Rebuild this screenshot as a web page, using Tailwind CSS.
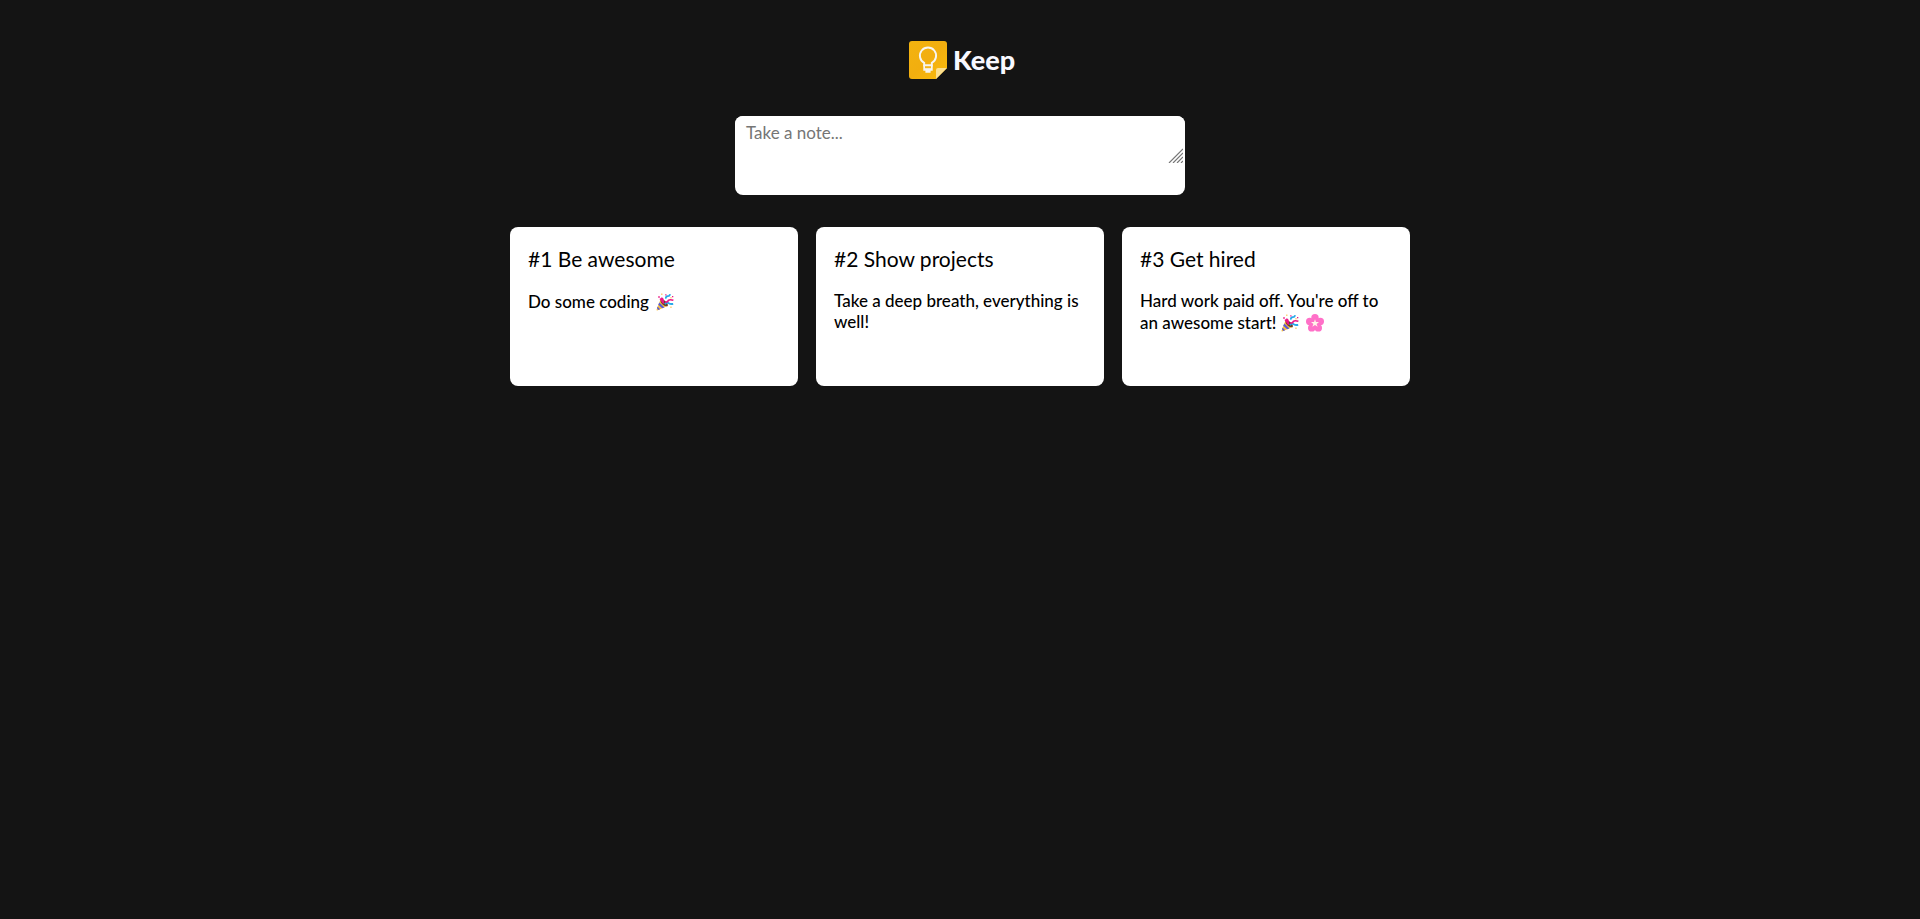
<!DOCTYPE html>
<html lang="en">
<head>
<meta charset="utf-8">
<meta name="viewport" content="width=device-width, initial-scale=1">
<title>Keep</title>
<script src="https://cdn.jsdelivr.net/npm/@tailwindcss/browser@4"></script>
</head>
<body class="min-h-screen bg-[#141414] px-4 font-['Gill_Sans','Gill_Sans_MT',Lato,sans-serif] text-black">
<svg class="hidden" aria-hidden="true">
  <symbol id="popper" viewBox="0 0 18 18">
    <path d="M4.5 6.5 11.5 13 1.2 17.4Q.2 17.6.6 16.6Z" fill="#fbc13a"/>
    <path d="M3.3 9.5 8.5 14.4 6.2 15.3 2.2 11.8ZM1.5 13.6 4.1 16.2 2.4 16.9 1 15.2Z" fill="#5b5bd6"/>
    <path d="M4.6 6.3Q7.5 5.8 10.2 8.8 12.6 11.5 11.6 13.2 8.8 13.8 6.3 11.2 3.9 8.7 4.6 6.3Z" fill="#6b4028"/>
    <path d="M5.2 5.2Q7.4 5.8 7 8.8M4.2 5.4 7.8 10.6" fill="none" stroke="#ec1686" stroke-width="1.8"/>
    <path d="M13.8 1.2Q14 3.2 11.8 3.2 9.6 3.4 9.9 5.6M8.8 11Q11 8.8 12.8 10.2 14.5 11.4 17.2 10.8" fill="none" stroke="#28a8ea" stroke-width="1.8"/>
    <path d="M9.3 9.2Q12.2 9 12.3 7.4 13.8 6 17.4 7.2" fill="none" stroke="#ec1686" stroke-width="1.5"/>
    <path d="M2.2 3.2h1.6v1.6H2.2zM9.2 1.2h1.3v1.3H9.2zM16 2.9h1.3v1.3H16z" fill="#ec1686"/>
    <path d="M5 .5h1.5V2H5zM14.3 4h1.4v1.4h-1.4zM14.2 13.4h1.5v1.5h-1.5z" fill="#fdd17c"/>
  </symbol>
  <symbol id="blossom" viewBox="0 0 18 18">
    <g fill="#ff70c8"><circle cx="9" cy="3.7" r="3.7"/><circle cx="14.3" cy="7.5" r="3.7"/><circle cx="12.3" cy="13.9" r="3.7"/><circle cx="5.7" cy="13.9" r="3.7"/><circle cx="3.7" cy="7.5" r="3.7"/><circle cx="9" cy="9" r="4"/></g>
    <path d="M9 5.2 10 8.1 13 8 10.6 9.9 11.7 12.8 9 11.1 6.3 12.8 7.4 9.9 5 8 8 8.1Z" fill="#fff4e8"/>
  </symbol>
</svg>

<header class="flex items-center justify-center gap-1.5 pt-[41px] pl-1">
  <svg class="size-[38px]" viewBox="0 0 38 38" aria-hidden="true">
    <defs>
      <linearGradient id="shade" x1="0" y1="0" x2="1" y2="1"><stop stop-color="#f3b30f"/><stop offset=".5" stop-color="#f2ae0f"/><stop offset="1" stop-color="#fbbc0c"/></linearGradient>
    </defs>
    <path d="M3 0H35Q38 0 38 3V27L27 38H3Q0 38 0 35V3Q0 0 3 0Z" fill="url(#shade)"/>
    <path d="M27 38V29Q27 27 29 27H38Z" fill="#fde08f"/>
    <path d="M15.2 24.5V21.8A8.1 8.1 0 1 1 22.8 21.8V24.5Z" fill="none" stroke="#f7f5f0" stroke-width="1.9"/>
    <path d="M14.3 23.6H23.7V29.8H21.6V31.8H16.4V29.8H14.3Z" fill="#f7f5f0"/>
    <path d="M16 25.2H22V27.2H16Z" fill="#f2b51f"/>
  </svg>
  <h1 class="text-[27px] leading-9 font-black text-[#f8f8ff]">Keep</h1>
</header>

<main>
  <form class="relative mx-auto mt-[37px] h-[79px] max-w-[450px] rounded-lg bg-white">
    <textarea aria-label="Take a note" placeholder="Take a note..." class="block h-12 w-full resize-none rounded-lg bg-white px-[11px] pt-[5px] text-[17px] leading-6 outline-none placeholder:text-[#757575]"></textarea>
    <svg class="absolute top-8 right-[2px] h-[15px] w-[15px]" viewBox="0 0 15 15" fill="none" stroke="#777" stroke-width="1.2" aria-hidden="true"><path d="M1 15 15 1M5 15 15 5M9 15 15 9M13 15 15 13"/></svg>
  </form>

  <section aria-label="Notes" class="mx-auto mt-8 grid max-w-[900px] grid-cols-1 gap-[18px] sm:grid-cols-3">
    <article class="min-h-[159px] rounded-lg bg-white px-[18px] pt-4">
      <h2 class="text-[21px] leading-8">#1 Be awesome</h2>
      <p class="mt-[15px] text-[17px] leading-[21px] font-medium">Do some coding <svg class="ml-[3px] inline h-6 w-[18px] align-[-6px]" role="img" aria-label="Party popper"><use href="#popper"/></svg></p>
    </article>
    <article class="min-h-[159px] rounded-lg bg-white px-[18px] pt-4">
      <h2 class="text-[21px] leading-8">#2 Show projects</h2>
      <p class="mt-[15px] text-[17px] leading-[21px] font-medium">Take a deep breath, everything is well!</p>
    </article>
    <article class="min-h-[159px] rounded-lg bg-white px-[18px] pt-4">
      <h2 class="text-[21px] leading-8">#3 Get hired</h2>
      <p class="mt-[15px] text-[17px] leading-[21px] font-medium">Hard work paid off. You're off to an awesome start! <svg class="inline h-6 w-[18px] align-[-6px]" role="img" aria-label="Party popper"><use href="#popper"/></svg> <svg class="ml-[3px] inline h-6 w-[18px] align-[-6px]" role="img" aria-label="Blossom"><use href="#blossom"/></svg></p>
    </article>
  </section>
</main>
</body>
</html>
